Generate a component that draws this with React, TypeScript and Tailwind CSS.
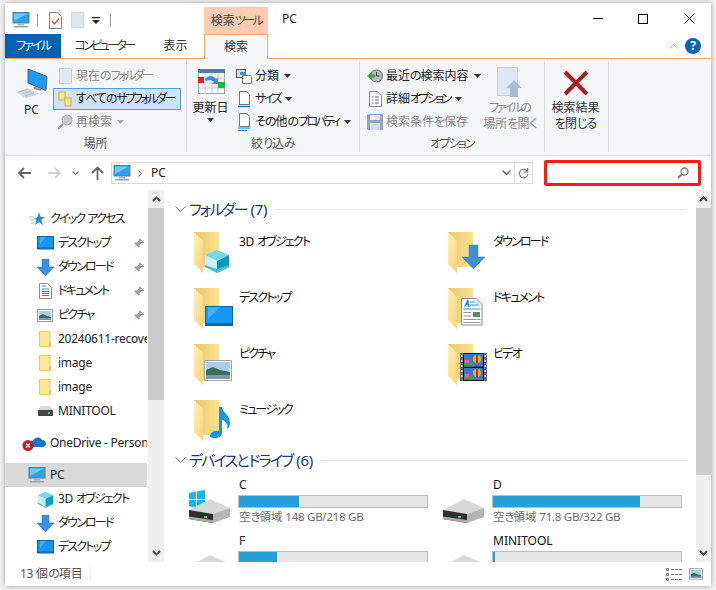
import React from "react";

// Yu Gothic UI sets kana much tighter than Noto, so tighten by script
const T = ({ children, tight }: { children: string; tight?: boolean }) => (
  <>
    {children.split(/([\u30a0-\u30ff]+|[\u3040-\u309f]+|[A-Za-z0-9 .()/-]+)/).filter(Boolean).map((run, i) => {
      let cls = "";
      if (/^[\u30a0-\u30ff]/.test(run)) cls = tight ? "tracking-[-2.6px]" : "tracking-[-1.8px]";
      else if (/^[\u3040-\u309f]/.test(run)) cls = "tracking-[-1px]";
      else if (/^[A-Za-z0-9 .()/-]/.test(run)) cls = "tracking-[-0.25px]";
      return (
        <span key={i} className={cls}>
          {run}
        </span>
      );
    })}
  </>
);

const Caret = () => (
  <svg width="7" height="4" viewBox="0 0 7 4" className="shrink-0">
    <path d="M0 0h7L3.500 4z" fill="#333" />
  </svg>
);

const GrayCaret = () => (
  <svg width="7" height="4" viewBox="0 0 7 4" className="shrink-0">
    <path d="M0 0h7L3.500 4z" fill="#a8a8a8" />
  </svg>
);

const Monitor = ({ w = 18 }: { w?: number }) => (
  <svg width={w} height={w} viewBox="0 0 18 18" className="shrink-0">
    <rect x="1" y="1.500" width="16" height="10.500" fill="#2ea0ee" stroke="#5c7c98" strokeWidth="1" />
    <path d="M2 2.500h14L2 10z" fill="#8fd4fb" opacity="0.7" />
    <rect x="6" y="12.500" width="6" height="2" fill="#9fb4c6" />
    <rect x="2" y="15" width="14" height="1.500" fill="#8fa7bb" />
  </svg>
);

const ScreenSmall = () => (
  <svg width="17" height="14" viewBox="0 0 17 14" className="shrink-0">
    <rect x="0.500" y="0.500" width="16" height="12.500" fill="#1796f0" stroke="#0a63a8" />
    <path d="M1 11.500h15V13H1z" fill="#0a6cb8" />
    <path d="M3 1h6L3 8z" fill="#3fb0f8" />
  </svg>
);

const ArrowDownSmall = () => (
  <svg width="17" height="17" viewBox="0 0 17 17" className="shrink-0">
    <path d="M5 0h7v8h5l-8.500 9L0 8h5z" fill="#3d8fdf" stroke="#2a72bd" strokeWidth="0.500" />
  </svg>
);

const DocSmall = () => (
  <svg width="13" height="16" viewBox="0 0 13 16" className="shrink-0">
    <path d="M.5.500h8l4 4v11H.5z" fill="#fff" stroke="#8b8b8b" />
    <path d="M3 3h4M3 6h7" stroke="#2d8fe0" strokeWidth="1.200" />
    <path d="M3 8.500h7M3 10.500h7M3 12.500h7" stroke="#777" strokeWidth="1" />
  </svg>
);

const PictureSmall = ({ w = 16, h = 13 }: { w?: number; h?: number }) => (
  <svg width={w} height={h} viewBox="0 0 16 13" className="shrink-0">
    <rect x="0.500" y="0.500" width="15" height="12" fill="#fff" stroke="#9a9a9a" />
    <rect x="2" y="2" width="12" height="9" fill="#a9cfe7" />
    <path d="M2 7l4-2 4 2 4 1v3H2z" fill="#3d6a59" />
    <rect x="2" y="9" width="12" height="2" fill="#7797ae" />
  </svg>
);

const FolderSmall = () => (
  <svg width="12" height="16" viewBox="0 0 12 16" className="shrink-0">
    <path d="M.5.500h10.500v15H.5z" fill="#fde79c" stroke="#edc659" />
    <path d="M10 11h2v5h-2z" fill="#edc659" />
  </svg>
);

const DriveSmall = () => (
  <svg width="15" height="10" viewBox="0 0 15 10" className="shrink-0">
    <path d="M3 0h9l3 4H0z" fill="#d9d9d9" />
    <rect x="0" y="4" width="15" height="6" rx="1" fill="#444" />
    <rect x="10" y="6" width="2" height="2" fill="#4ade60" />
  </svg>
);

const Cube = ({ s = 17 }: { s?: number }) => (
  <svg width={s} height={s} viewBox="0 0 24 24" className="shrink-0">
    <path d="M12 1l11 5-11 5L1 6z" fill="#6fdbe8" />
    <path d="M1 6l11 5v12L1 18z" fill="#c7f0f2" />
    <path d="M23 6l-11 5v12l11-5z" fill="#0a9fc4" />
    <path d="M1 16l11 7 11-5v1l-11 5-11-6z" fill="#3fc0d2" />
  </svg>
);

const Pin = () => (
  <svg width="11" height="11" viewBox="0 0 11 11" className="shrink-0">
    <path d="M6.500 0L11 4.500 9.800 5.300 8.600 5 6.500 7.200 6.700 9 5.800 9.800 1.200 5.200 2 4.400 3.900 4.600 6 2.400 5.700 1.200zM3 7.500L0 11l3.500-3z" fill="#9aa0a6" />
  </svg>
);

const BigFolder = ({ children }: { children?: React.ReactNode }) => (
  <svg width="40" height="41" viewBox="0 0 40 41" className="shrink-0">
    <defs>
      <linearGradient id="fb" x1="0" x2="1" y1="0" y2="0">
        <stop offset="0" stopColor="#e9c66f" />
        <stop offset="1" stopColor="#fde28f" />
      </linearGradient>
      <linearGradient id="fl" x1="0" x2="1" y1="0" y2="1">
        <stop offset="0" stopColor="#fff0b8" />
        <stop offset="1" stopColor="#f5d27a" />
      </linearGradient>
    </defs>
    <path d="M0 0h25v35H8z" fill="url(#fb)" />
    <path d="M0 0l9 9v32L0 32z" fill="url(#fl)" />
    {children}
  </svg>
);

const overlays: Record<string, React.ReactNode> = {
  cube: (
    <g>
      <path d="M11 23l12-5 12 5-12 6z" fill="#6fdbe8" />
      <path d="M11 23l12 6v12l-12-6z" fill="#c9f1f3" />
      <path d="M35 23l-12 6v12l12-6z" fill="#0a97bc" />
      <path d="M11 33l12 4 12-4v2l-12 6-12-6z" fill="#43c4d4" />
    </g>
  ),
  down: <path d="M21 13h9v12h7L25.500 37 14 25h7z" fill="#3d8fdf" stroke="#2f7ecb" strokeWidth="0.500" />,
  screen: (
    <g>
      <rect x="11.500" y="18.500" width="27" height="19" fill="#1898f5" stroke="#0a63a8" />
      <path d="M14 19h12L14 31z" fill="#40b2fb" />
      <rect x="12" y="35" width="26" height="2" fill="#0a6cb8" />
    </g>
  ),
  doc: (
    <g>
      <path d="M13.500 10.500h15l5.500 5.500v21H13.500z" fill="#fff" stroke="#8b8b8b" />
      <path d="M28.500 10.500v5.500h5.500z" fill="#ddd" />
      <path d="M16 19l3-7h1.500l1 7h-1.500l-.2-2h-1.800l-.7 2z" fill="#2d8fe0" />
      <path d="M22 14h5M22 17h9M15.500 21h17" stroke="#2d8fe0" strokeWidth="1" />
      <path d="M15.500 24.500h8M15.500 28h8M15.500 31.500h17M15.500 34.500h17" stroke="#999" strokeWidth="1" />
      <rect x="25" y="24" width="7" height="5" fill="#5e8478" />
    </g>
  ),
  picture: (
    <g>
      <rect x="10.500" y="16.500" width="27" height="20" fill="#fff" stroke="#a5a5a5" />
      <rect x="12" y="18" width="24" height="17" fill="#a5d0ea" />
      <path d="M12 26l7-3 7 3 10 2v7H12z" fill="#3f6d5c" />
      <rect x="12" y="31" width="24" height="4" fill="#7898b0" />
    </g>
  ),
  film: (
    <g>
      <rect x="12" y="9" width="27" height="28" fill="#6a6a6a" />
      <rect x="15" y="9" width="21" height="28" fill="#141414" />
      <rect x="16" y="10" width="19" height="12.500" fill="#3f74d6" />
      <rect x="16" y="24" width="19" height="12" fill="#3f74d6" />
      <path d="M16 18l5-3 5 4v3.500H16zM16 32l5-3 5 4v3H16z" fill="#3c9a55" />
      <path d="M17 16h4v3h-4zM17 30h4v3h-4z" fill="#d86a8f" />
      <circle cx="29" cy="15" r="4" fill="#e7b22a" />
      <rect x="28" y="11" width="2" height="8" fill="#c42f2a" />
      <circle cx="29" cy="29" r="4" fill="#e7b22a" />
      <rect x="28" y="25" width="2" height="8" fill="#c42f2a" />
      <path d="M13 11h1.500v2H13zM13 16h1.500v2H13zM13 21h1.500v2H13zM13 26h1.500v2H13zM13 31h1.500v2H13zM36.500 11H38v2h-1.500zM36.500 16H38v2h-1.500zM36.500 21H38v2h-1.500zM36.500 26H38v2h-1.500zM36.500 31H38v2h-1.500z" fill="#eee" />
    </g>
  ),
  note: <path d="M25 7h3c0 5 8 8 8 16 0 3-1 5-3 6 1-3 0-8-5-9v12c0 4-3 6-7 6-3 0-6-1-5-3 1-3 5-5 9-4z" fill="#0f97e8" />,
};

const RibbonRow = ({
  icon,
  label,
  gray,
  selected,
  caret,
}: {
  icon: React.ReactNode;
  label: string;
  gray?: boolean;
  selected?: boolean;
  caret?: "dark" | "gray";
}) => (
  <div
    className={`flex items-center h-[22px] gap-[2px] pl-[2px] whitespace-nowrap border ${
      selected ? "bg-[#cce4f7] border-[#5b9bd5]" : "border-transparent"
    } ${gray ? "text-[#8a8a8a]" : "text-[#222]"}`}
  >
    <span className="w-[18px] flex justify-center shrink-0">{icon}</span>
    <span>
      <T tight>{label}</T>
    </span>
    {caret === "dark" && <span className="ml-[3px]"><Caret /></span>}
    {caret === "gray" && <span className="ml-[3px]"><GrayCaret /></span>}
  </div>
);

const Group = ({ width, label, children }: { width: string; label: string; children: React.ReactNode }) => (
  <div className={`flex flex-col border-r border-[#dadbdc] mt-[2px] mb-[3px] ${width}`}>
    <div className="flex h-[72px] mt-[4px]">{children}</div>
    <div className="mt-auto h-[18px] leading-[20px] text-center text-[#555]">
      <T>{label}</T>
    </div>
  </div>
);

const BarDrive = ({ letter, pct, free, windows }: { letter: string; pct: number; free?: string; windows?: boolean }) => (
  <div className="flex h-[56px] overflow-hidden">
    <div className="w-[55px] pl-[5px] pt-[8px] shrink-0">
      <svg width="44" height="40" viewBox="0 0 44 40">
        {windows && <path d="M1 9l7-1.500v7.500H1zM9 7.300L17 6v9H9zM1 16h7v7.500L1 22.500zM9 16h8v9l-8-1.300z" fill="#17b4f0" />}
        <path d="M1 26l21-11 20 9-17 6z" fill="#d8d8d8" />
        <path d="M1 26l24 4v9L1 35z" fill="#2e2e2e" />
        <path d="M1 32.500L25 36v3L1 35z" fill="#a8a8a8" />
        <path d="M25 30l17-6v9l-17 6z" fill="#b4b4b4" />
        <rect x="16" y="32" width="3" height="2" fill="#48d048" />
      </svg>
    </div>
    <div className="w-[190px] shrink-0">
      <div className="h-[16px] leading-[16px] text-[#111] pl-[1px] mt-[1px] mb-[2px]">{letter}</div>
      <div className="h-[13px] bg-[#e6e6e6] border border-[#bcbcbc]">
        <div className="h-full bg-[#26a0da]" style={{ width: `${pct}%` }} />
      </div>
      {free && (
        <div className="h-[18px] leading-[18px] pl-[1px] text-[11.500px] text-[#6d6d6d] whitespace-nowrap">
          <T>{free}</T>
        </div>
      )}
    </div>
  </div>
);

const FolderItem = ({ name, overlay }: { name: string; overlay: string }) => (
  <div className="h-[56px] flex pl-[5px]">
    <BigFolder>{overlays[overlay]}</BigFolder>
    <div className="ml-[5px] mt-[1px] h-[18px] leading-[18px] text-[#111] whitespace-nowrap">
      <T>{name}</T>
    </div>
  </div>
);

const GroupHead = ({ label }: { label: string }) => (
  <div className="flex items-center h-[20px] pl-[11px] pr-[9px]">
    <svg width="11" height="7" viewBox="0 0 11 7" className="shrink-0">
      <path d="M.5.500l5 5 5-5" fill="none" stroke="#777" />
    </svg>
    <span className="ml-[3px] text-[15px] leading-[20px] text-[#1e3287] whitespace-nowrap">
      <T>{label}</T>
    </span>
    <div className="flex-1 h-px bg-[#e3e3e3] ml-[8px]" />
  </div>
);

const NavRow = ({
  icon,
  label,
  indent,
  pin,
  selected,
}: {
  icon: React.ReactNode;
  label: string;
  indent?: boolean;
  pin?: boolean;
  selected?: boolean;
}) => (
  <div className={`flex items-center h-[24px] whitespace-nowrap overflow-hidden ${selected ? "bg-[#d9d9d9]" : ""}`}>
    <span className={`flex justify-center shrink-0 ${indent ? "ml-[31px] w-[18px] mr-[4px]" : "ml-[23px] w-[18px] mr-[4px]"}`}>{icon}</span>
    <span className="flex-1 text-[#222] overflow-hidden">
      <T>{label}</T>
    </span>
    {pin && <span className="mr-[3px]"><Pin /></span>}
  </div>
);

const Thick = ({ up }: { up?: boolean }) => (
  <svg width="9" height="6" viewBox="0 0 9 6" className={up ? "" : "rotate-180"}>
    <path d="M1 5l3.500-3.500L8 5" fill="none" stroke="#555" strokeWidth="2" />
  </svg>
);

export default function App() {
  return (
    <div className="w-[716px] h-[590px] bg-[#f4f4f4] pt-[3px] pl-[5px] overflow-hidden font-['Noto_Sans','Noto_Sans_CJK_JP',sans-serif] text-[12px] [font-feature-settings:'palt']">
      <div className="w-[706px] h-[583px] bg-white flex flex-col shadow-[0_0_6px_rgba(0,0,0,0.35)]">
        {/* title bar */}
        <div className="flex h-[31px] shrink-0">
          <div className="flex items-center gap-[7px] pl-[7px] pt-[3px] w-[199px] shrink-0">
            <Monitor />
            <div className="w-px h-[13px] bg-[#9a9a9a]" />
            <svg width="13" height="17" viewBox="0 0 13 17" className="ml-[4px]">
              <path d="M.5.500h8l4 4v12H.5z" fill="#fff" stroke="#888" />
              <path d="M3 9l2.500 3L10 6.500" fill="none" stroke="#d9542b" strokeWidth="1.300" />
            </svg>
            <svg width="13" height="16" viewBox="0 0 13 16" className="ml-[2px]">
              <path d="M.5.500h12v15H.5z" fill="#dfe7f3" stroke="#ccd6e6" />
            </svg>
            <svg width="8" height="7" viewBox="0 0 8 7" className="ml-[1px]">
              <path d="M0 0h8v1.200H0zM0 3h8L4 7z" fill="#222" />
            </svg>
            <div className="w-px h-[13px] bg-[#9a9a9a] ml-[3px]" />
          </div>
          <div className="w-[64px] mt-[4px] bg-[#ffccb3] text-[#444] text-center leading-[27px] shrink-0">
            <T tight>検索ツール</T>
          </div>
          <div className="ml-[14px] pt-[8px] text-[#222] leading-[16px]">PC</div>
          <div className="ml-auto flex mr-[-1px]">
            <div className="w-[45px] flex items-center justify-center">
              <div className="w-[10px] h-px bg-black" />
            </div>
            <div className="w-[46px] flex items-center justify-center">
              <div className="w-[10px] h-[10px] border border-black" />
            </div>
            <div className="w-[46px] flex items-center justify-center">
              <svg width="11" height="11" viewBox="0 0 11 11">
                <path d="M.5.500l10 10M10.500.500l-10 10" stroke="#111" />
              </svg>
            </div>
          </div>
        </div>
        {/* tabs */}
        <div className="flex h-[25px] shrink-0 items-stretch border-b border-[#ffa46e]">
          <div className="w-[56px] bg-[#0063b1] text-white text-center leading-[24px]">
            <T>ファイル</T>
          </div>
          <div className="w-[86px] text-center leading-[24px] text-[#333]">
            <T tight>コンピューター</T>
          </div>
          <div className="w-[57px] text-center leading-[24px] text-[#333]">表示</div>
          <div className="w-[64px] h-[25px] bg-[#f5f6f7] border-x border-t border-[#ffa46e] text-center leading-[23px] text-[#333]">検索</div>
          <div className="ml-auto flex items-center pr-[10px] gap-[7px] pb-[1px]">
            <svg width="9" height="6" viewBox="0 0 9 6">
              <path d="M.5 5.500l4-4 4 4" fill="none" stroke="#bbb" />
            </svg>
            <div className="w-[16px] h-[16px] rounded-full bg-[#0b64b8] text-white text-center text-[12px] font-bold leading-[16px]">?</div>
          </div>
        </div>
        {/* ribbon */}
        <div className="flex h-[97px] shrink-0 bg-[#f5f6f7] border-b border-[#dadbdc]">
          <Group width="w-[182px]" label="場所">
            <div className="w-[48px] flex flex-col items-center shrink-0 pl-[5px]">
              <svg width="33" height="30" viewBox="0 0 33 30" className="mt-[3px]">
                <path d="M13 1l19 7.500-1 14L13 15z" fill="#1e9af2" stroke="#4a6478" />
                <path d="M19 18l7 3v2l-7-2z" fill="#8a9298" />
                <path d="M1 24l12-4 12 6-14 4z" fill="#d4d7da" />
                <path d="M4 24l9-3M7 26l9-3M10 28l9-3" stroke="#b0b4b8" strokeWidth="0.700" />
              </svg>
              <div className="leading-[16px] mt-[4px] text-[#222]">PC</div>
            </div>
            <div className="w-[128px] shrink-0 flex flex-col">
              <RibbonRow
                gray
                label="現在のフォルダー"
                icon={
                  <svg width="13" height="16" viewBox="0 0 13 16">
                    <path d="M.5.500h12v15H.5z" fill="#dfe7f3" stroke="#c6d0de" />
                  </svg>
                }
              />
              <div className="h-px" />
              <RibbonRow
                selected
                label="すべてのサブフォルダー"
                icon={
                  <svg width="14" height="16" viewBox="0 0 14 16">
                    <rect x="1" y="1" width="6" height="8" fill="#fde79c" stroke="#d9a92b" />
                    <rect x="7" y="7" width="6" height="8" fill="#fde79c" stroke="#d9a92b" />
                  </svg>
                }
              />
              <div className="h-px" />
              <RibbonRow
                gray
                caret="gray"
                label="再検索"
                icon={
                  <svg width="16" height="16" viewBox="0 0 16 16">
                    <circle cx="10" cy="6" r="5" fill="#c3c8cd" stroke="#a5a9ad" />
                    <path d="M6 10l-5 5" stroke="#9a9ea3" strokeWidth="2" />
                  </svg>
                }
              />
            </div>
          </Group>
          <Group width="w-[173px]" label="絞り込み">
            <div className="w-[43px] ml-[2px] shrink-0 flex flex-col items-center">
              <svg width="27" height="25" viewBox="0 0 27 25" className="mt-[4px] ml-[1px]">
                <rect x="0.500" y="0.500" width="26" height="24" fill="#fff" stroke="#9aa7b3" />
                <rect x="0" y="0" width="27" height="4" fill="#5b7b96" />
                <path d="M0 9h27M0 14h27M0 19h27M7 4v21M14 4v21M20 4v21" stroke="#b9c8d6" />
                <rect x="0" y="8" width="6" height="6" fill="#d9261c" />
                <rect x="20" y="13" width="7" height="6" fill="#1fb43a" />
                <path d="M7 10c3-4 8-4 11 0l2-1v6h-6l2-2c-2-2-5-2-8-1z" fill="#2f8fd8" />
              </svg>
              <div className="leading-[16px] mt-[6px] text-[#222] whitespace-nowrap">更新日</div>
              <div className="mt-[2px]"><Caret /></div>
            </div>
            <div className="flex flex-col">
              <RibbonRow
                caret="dark"
                label="分類"
                icon={
                  <svg width="16" height="15" viewBox="0 0 16 15">
                    <rect x="0.500" y="0.500" width="9" height="8" fill="#ddd" stroke="#555" />
                    <rect x="4" y="3" width="6" height="3" fill="#3e8fdc" />
                    <path d="M6.500 6.500h8l1 1v7h-9z" fill="#fff" stroke="#777" />
                  </svg>
                }
              />
              <div className="h-px" />
              <RibbonRow
                caret="dark"
                label="サイズ"
                icon={
                  <svg width="12" height="17" viewBox="0 0 12 17">
                    <path d="M1.500.500h7l3 3v10h-10z" fill="#fff" stroke="#777" />
                    <path d="M0 15.500h12" stroke="#1f78cf" strokeWidth="1.500" />
                  </svg>
                }
              />
              <div className="h-px" />
              <RibbonRow
                caret="dark"
                label="その他のプロパティ"
                icon={
                  <svg width="12" height="18" viewBox="0 0 12 18">
                    <path d="M1.500.500h7l3 3v10h-10z" fill="#fff" stroke="#777" />
                    <path d="M0 15h12M0 17.500h9" stroke="#1f78cf" />
                  </svg>
                }
              />
            </div>
          </Group>
          <Group width="w-[185px]" label="オプション">
            <div className="flex flex-col w-[116px] shrink-0 pl-[3px]">
              <RibbonRow
                caret="dark"
                label="最近の検索内容"
                icon={
                  <svg width="16" height="14" viewBox="0 0 16 14">
                    <circle cx="9.500" cy="7" r="6" fill="#b9bcbd" stroke="#666" />
                    <path d="M9.500 3v4h3" fill="none" stroke="#333" />
                    <path d="M0 7l5-4v2.500h3v3H5V11z" fill="#38a838" />
                  </svg>
                }
              />
              <div className="h-px" />
              <RibbonRow
                caret="dark"
                label="詳細オプション"
                icon={
                  <svg width="13" height="16" viewBox="0 0 13 16">
                    <path d="M.5.500h8l4 4v11H.5z" fill="#fff" stroke="#888" />
                    <path d="M3 6h1.500M6 6h4M3 9h1.500M6 9h4M3 12h1.500M6 12h4" stroke="#666" />
                  </svg>
                }
              />
              <div className="h-px" />
              <RibbonRow
                gray
                label="検索条件を保存"
                icon={
                  <svg width="16" height="16" viewBox="0 0 16 16">
                    <rect width="16" height="16" rx="1" fill="#8fa6c4" />
                    <rect x="3" y="1" width="10" height="5" fill="#e8edf3" />
                    <rect x="3" y="9" width="10" height="7" fill="#d6dce3" />
                  </svg>
                }
              />
            </div>
            <div className="flex-1 flex flex-col items-center text-[#8a8a8a]">
              <svg width="26" height="31" viewBox="0 0 26 31" className="mt-[2px]">
                <rect x="0.500" y="0.500" width="20" height="28" fill="#dfe7f3" stroke="#c6d0de" />
                <path d="M17 13l8 8h-4v9h-8v-9H9z" fill="#a5bcd6" />
              </svg>
              <div className="leading-[16px] mt-[2px] whitespace-nowrap">
                <T tight>ファイルの</T>
              </div>
              <div className="leading-[16px] whitespace-nowrap">
                <T>場所を開く</T>
              </div>
            </div>
          </Group>
          <Group width="w-[64px]" label="">
            <div className="flex-1 flex flex-col items-center text-[#333] pr-[2px]">
              <svg width="26" height="26" viewBox="0 0 26 26" className="mt-[5px]">
                <path d="M2 2l22 22M24 2L2 24" stroke="#a81c22" strokeWidth="4" />
              </svg>
              <div className="leading-[16px] mt-[4px] whitespace-nowrap">検索結果</div>
              <div className="leading-[16px] whitespace-nowrap">
                <T>を閉じる</T>
              </div>
            </div>
          </Group>
        </div>
        {/* address bar */}
        <div className="flex items-center h-[34px] shrink-0">
          <div className="flex items-center pl-[13px] w-[106px] shrink-0">
            <svg width="13" height="12" viewBox="0 0 13 12">
              <path d="M6 1L1 6l5 5M1 6h12" fill="none" stroke="#666" strokeWidth="1.800" />
            </svg>
            <svg width="13" height="12" viewBox="0 0 13 12" className="ml-[17px]">
              <path d="M7 1l5 5-5 5M12 6H0" fill="none" stroke="#d2d2d2" strokeWidth="1.800" />
            </svg>
            <svg width="7" height="5" viewBox="0 0 7 5" className="ml-[11px]">
              <path d="M.5.500l3 3 3-3" fill="none" stroke="#777" strokeWidth="1.200" />
            </svg>
            <svg width="13" height="14" viewBox="0 0 13 14" className="ml-[12px]">
              <path d="M1 7l5.500-5.500L12 7M6.500 2v12" fill="none" stroke="#666" strokeWidth="1.800" />
            </svg>
          </div>
          <div className="flex items-center w-[422px] h-[22px] border border-[#d9d9d9] shrink-0">
            <span className="ml-[1px]"><Monitor /></span>
            <svg width="5" height="7" viewBox="0 0 5 7" className="ml-[7px]">
              <path d="M.5.500l3 3-3 3" fill="none" stroke="#666" />
            </svg>
            <span className="ml-[8px] text-[#222]">PC</span>
            <svg width="9" height="6" viewBox="0 0 9 6" className="ml-auto mr-[3px]">
              <path d="M.5.500l4 4 4-4" fill="none" stroke="#666" strokeWidth="1.300" />
            </svg>
            <div className="w-[18px] h-full border-l border-[#d9d9d9] flex items-center justify-center">
              <svg width="11" height="12" viewBox="0 0 11 12">
                <path d="M9.500 4.500A4.300 4.300 0 1 0 10 7M9.700 1v4H6" fill="none" stroke="#777" strokeWidth="1.200" />
              </svg>
            </div>
          </div>
          <div className="ml-[11px] w-[157px] h-[26px] border-[3px] border-[#ff1a1a] rounded-[2px] flex items-center justify-end pr-[9px] shrink-0">
            <svg width="12" height="12" viewBox="0 0 12 12">
              <circle cx="7.500" cy="4.500" r="3.500" fill="none" stroke="#777" strokeWidth="1.300" />
              <path d="M5 7l-4 4" stroke="#777" strokeWidth="1.800" />
            </svg>
          </div>
        </div>
        {/* body */}
        <div className="flex flex-1 min-h-0">
          <div className="w-[142px] shrink-0 pt-[17px] overflow-hidden">
            <NavRow
              label="クイック アクセス"
              icon={
                <svg width="16" height="15" viewBox="0 0 16 15">
                  <path d="M10 0l1.600 4.800L16 5l-3.500 3 1.300 5-3.800-2.800L6 13l1.400-5L5 6h3z" fill="#2f8de0" />
                  <path d="M0 5h5M1 8h4M2 11h3" stroke="#8fc1ee" />
                </svg>
              }
            />
            <NavRow indent pin label="デスクトップ" icon={<ScreenSmall />} />
            <NavRow indent pin label="ダウンロード" icon={<ArrowDownSmall />} />
            <NavRow indent pin label="ドキュメント" icon={<DocSmall />} />
            <NavRow indent pin label="ピクチャ" icon={<PictureSmall />} />
            <NavRow indent label="20240611-recovery" icon={<FolderSmall />} />
            <NavRow indent label="image" icon={<FolderSmall />} />
            <NavRow indent label="image" icon={<FolderSmall />} />
            <NavRow indent label="MINITOOL" icon={<DriveSmall />} />
            <div className="h-[8px]" />
            <div className="flex items-center h-[24px] whitespace-nowrap overflow-hidden">
              <svg width="24" height="16" viewBox="0 0 24 16" className="ml-[17px] shrink-0">
                <path d="M6 9c0-3 3-4 5-3 1-4 7-5 9-1 3 0 4 2 4 4 0 2-2 3-3 3H9c-2 0-3-1-3-3z" fill="#1277c9" />
                <circle cx="6" cy="10.500" r="5.500" fill="#c4182c" />
                <path d="M4 8.500l4 4M8 8.500l-4 4" stroke="#fff" strokeWidth="1.200" />
              </svg>
              <span className="ml-[4px] text-[#222]">
                <T>OneDrive - Personal</T>
              </span>
            </div>
            <div className="h-[8px]" />
            <NavRow selected label="PC" icon={<Monitor />} />
            <NavRow indent label="3D オブジェクト" icon={<Cube />} />
            <NavRow indent label="ダウンロード" icon={<ArrowDownSmall />} />
            <NavRow indent label="デスクトップ" icon={<ScreenSmall />} />
          </div>
          <div className="w-[16px] shrink-0 bg-[#f0f0f0] flex flex-col ml-[1px]">
            <div className="h-[18px] flex items-center justify-center shrink-0"><Thick up /></div>
            <div className="h-[192px] bg-[#cdcdcd] shrink-0" />
            <div className="mt-auto h-[18px] flex items-center justify-center"><Thick /></div>
          </div>
          <div className="flex-1 min-w-0 overflow-hidden pt-[9px]">
            <GroupHead label="フォルダー (7)" />
            <div className="grid grid-cols-[254px_254px] pl-[25px] pt-[13px]">
              <FolderItem name="3D オブジェクト" overlay="cube" />
              <FolderItem name="ダウンロード" overlay="down" />
              <FolderItem name="デスクトップ" overlay="screen" />
              <FolderItem name="ドキュメント" overlay="doc" />
              <FolderItem name="ピクチャ" overlay="picture" />
              <FolderItem name="ビデオ" overlay="film" />
              <FolderItem name="ミュージック" overlay="note" />
            </div>
            <div className="mt-[-6px]"><GroupHead label="デバイスとドライブ (6)" /></div>
            <div className="grid grid-cols-[254px_254px] pl-[19px] pt-[6px]">
              <BarDrive letter="C" pct={32} free="空き領域 148 GB/218 GB" windows />
              <BarDrive letter="D" pct={78} free="空き領域 71.8 GB/322 GB" />
              <BarDrive letter="F" pct={20} />
              <BarDrive letter="MINITOOL" pct={1} />
            </div>
          </div>
          <div className="w-[15px] shrink-0 bg-[#f0f0f0] flex flex-col">
            <div className="h-[18px] flex items-center justify-center shrink-0"><Thick up /></div>
            <div className="h-[267px] bg-[#cdcdcd] shrink-0" />
            <div className="mt-auto h-[18px] flex items-center justify-center"><Thick /></div>
          </div>
        </div>
        {/* status bar */}
        <div className="flex items-center h-[24px] shrink-0 text-[#555]">
          <span className="ml-[15px]">
            <T>13 個の項目</T>
          </span>
          <div className="w-px h-[14px] bg-[#ececec] ml-[7px]" />
          <svg width="16" height="13" viewBox="0 0 16 13" className="ml-auto">
            <path d="M.5.500h2v2h-2zM.5 5.500h2v2h-2zM.5 10.500h2v2h-2z" fill="none" stroke="#777" />
            <path d="M5 1.500h11M5 6.500h11M5 11.500h11" stroke="#777" strokeDasharray="3 1" />
          </svg>
          <span className="ml-[7px] mr-[8px]"><PictureSmall w={14} h={12} /></span>
        </div>
      </div>
    </div>
  );
}
